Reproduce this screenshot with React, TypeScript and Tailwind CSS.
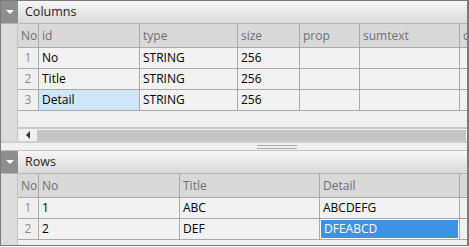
const font = { fontFamily: '"Open Sans", "Noto Sans", sans-serif' };

function PanelHeader({ title }: { title: string }) {
    return (
        <div className="flex h-[23px] border-b border-[#b4b4b4]">
            <div className="w-[17px] bg-[#8e8e8e] flex items-center justify-center">
                <span className="block w-0 h-0 border-l-[4px] border-r-[4px] border-t-[4px] border-l-transparent border-r-transparent border-t-white"></span>
            </div>
            <div className="flex-1 bg-gradient-to-b from-[#f6f6f6] to-[#dadada] pl-[7px] flex items-center text-[12.5px] text-[#1e1e1e]">{title}</div>
        </div>
    )
}

type Col = { name: string; w: number }

function Grid({ cols, rows, selected, active }: { cols: Col[]; rows: string[][]; selected: [number, number]; active: boolean }) {
    return (
        <div className="flex flex-col">
            <div className="flex h-[24px] bg-[#d9d9d9] border-b border-[#a9a9a9]">
                <div className="w-[21px] shrink-0 border-r border-[#a9a9a9] pl-[3px] flex items-center text-[#6f6f6f]">No</div>
                {cols.map((c) => (
                    <div key={c.name} style={{ width: c.w }} className="shrink-0 border-r border-[#a9a9a9] pl-[3px] flex items-center text-[#6f6f6f] overflow-hidden whitespace-nowrap">{c.name}</div>
                ))}
            </div>
            {rows.map((r, i) => (
                <div key={i} className="flex h-[21px] border-b border-[#a9a9a9]">
                    <div className="w-[21px] shrink-0 border-r border-[#a9a9a9] flex items-center justify-center text-[#8a8a8a] bg-[#f0f0f0]">{i + 1}</div>
                    {cols.map((c, j) => {
                        const sel = selected[0] === i && selected[1] === j
                        return (
                            <div key={c.name} style={{ width: c.w }} className="shrink-0 border-r border-[#a9a9a9] flex">
                                <div className={"flex-1 flex items-center pl-[3px] whitespace-nowrap overflow-hidden " + (sel ? (active ? "bg-[#3f91e4] text-white border border-[#ffffff]" : "bg-[#cde6f8] text-black") : "bg-[#f2f2f2] text-black")}>{r[j] ?? ""}</div>
                            </div>
                        )
                    })}
                </div>
            ))}
        </div>
    )
}

export default function App() {
    return (
        <div className="w-[469px] h-[247px] bg-white" style={font}>
            <div className="w-[469px] h-[246px] border-t border-l border-b border-r-2 border-[#7a7a7a] bg-[#f0f0f0] flex flex-col text-[12px] overflow-hidden">
                <PanelHeader title="Columns" />
                <div className="flex">
                    <div className="w-[17px] shrink-0 bg-[#dcdcdc] border-r border-[#c4c4c4]"></div>
                    <div className="flex-1 flex flex-col overflow-hidden">
                        <div className="h-[103px] overflow-hidden">
                            <Grid
                                cols={[
                                    { name: "id", w: 101 },
                                    { name: "type", w: 98 },
                                    { name: "size", w: 62 },
                                    { name: "prop", w: 60 },
                                    { name: "sumtext", w: 100 },
                                    { name: "comment", w: 80 },
                                ]}
                                rows={[
                                    ["No", "STRING", "256", "", "", ""],
                                    ["Title", "STRING", "256", "", "", ""],
                                    ["Detail", "STRING", "256", "", "", ""],
                                ]}
                                selected={[2, 0]}
                                active={false}
                            />
                        </div>
                        <div className="h-[14px] border-t-2 border-[#c8c8c8] flex items-center">
                            <div className="w-[19px] flex items-center justify-center">
                                <span className="block w-0 h-0 border-t-[4px] border-b-[4px] border-r-[4px] border-t-transparent border-b-transparent border-r-[#333]"></span>
                            </div>
                            <div className="flex-1 h-[11px] bg-[#c4c4c4] mr-[1px]"></div>
                        </div>
                    </div>
                </div>
                <div className="h-[10px] border-t-2 border-[#cfcfcf] border-b border-b-[#c2c2c2] flex items-center justify-center pl-[86px]">
                    <div className="w-[40px] h-[4px] border-t border-b border-[#a8a8a8]"></div>
                </div>
                <PanelHeader title="Rows" />
                <div className="flex flex-1">
                    <div className="w-[17px] shrink-0 bg-[#dcdcdc] border-r border-[#c4c4c4]"></div>
                    <div className="flex-1 overflow-hidden">
                        <Grid
                            cols={[
                                { name: "No", w: 141 },
                                { name: "Title", w: 140 },
                                { name: "Detail", w: 140 },
                            ]}
                            rows={[
                                ["1", "ABC", "ABCDEFG"],
                                ["2", "DEF", "DFEABCD"],
                            ]}
                            selected={[1, 2]}
                            active={true}
                        />
                    </div>
                </div>
            </div>
        </div>
    )
}
